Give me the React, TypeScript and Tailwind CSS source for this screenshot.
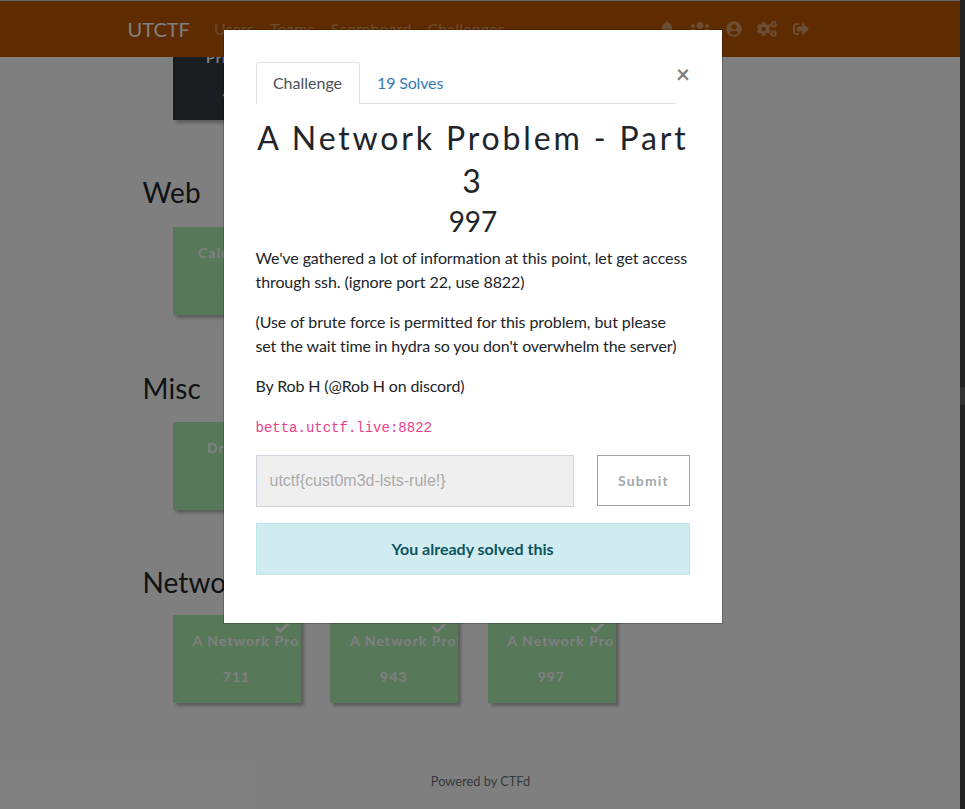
import React from "react";
import { FaBell, FaUsers, FaUserCircle, FaCogs, FaSignOutAlt, FaCheck } from "react-icons/fa";

type Item = { name: string; points: string; solved?: boolean; pad: string };

const green = "bg-[#b1f1b4]";

function Card({ item, color = green }: { item: Item; color?: string }) {
  return (
    <div
      className={`relative h-[88px] w-[128px] shrink-0 overflow-visible ${color} shadow-[3px_3px_3px_rgba(0,0,0,0.28)]`}
    >
      {item.solved && <FaCheck className="absolute right-[12px] top-[6px] text-white" size={14} />}
      <div className="h-full overflow-hidden whitespace-nowrap text-[14px] font-bold leading-[21px] tracking-[1.08px] text-white">
        <p className={`pt-[15px] ${item.pad}`}>{item.name}</p>
        <p className="pr-[1px] pt-[15px] text-center">{item.points}</p>
      </div>
    </div>
  );
}

function Category({
  title,
  items,
  className,
  gap = "pt-[18px]",
}: {
  title: string;
  items: Item[];
  className: string;
  gap?: string;
}) {
  return (
    <section className={className}>
      <h3 className="h-[34px] pl-[142.5px] text-[28px] leading-[34px] tracking-[0.1px] text-[#212529]">{title}</h3>
      <div className={`flex gap-[29.4px] pl-[173px] ${gap}`}>
        {items.map((i) => (
          <Card key={i.points + i.name} item={i} />
        ))}
      </div>
    </section>
  );
}

function Navbar() {
  return (
    <nav className="relative z-10 flex h-[57px] items-center border-t border-[#ccc] bg-[#bf5700] pl-[127.5px] text-white">
      <span className="w-[86.5px] text-[20px] leading-[30px]">UTCTF</span>
      <div className="flex w-[443px] gap-4 text-[16px] tracking-[0.12px] text-white/40">
        <span>Users</span>
        <span>Teams</span>
        <span>Scoreboard</span>
        <span>Challenges</span>
      </div>
      <div className="flex items-center text-white/40">
        <FaBell className="ml-[2px]" size={16} />
        <FaUsers className="ml-[15px]" size={20} />
        <FaUserCircle className="ml-[16px]" size={16} />
        <FaCogs className="ml-[15px]" size={20} />
        <FaSignOutAlt className="ml-[16px]" size={16} />
      </div>
    </nav>
  );
}

function Modal() {
  return (
    <div className="h-[595px] w-[500px] border border-black/20 bg-white bg-clip-padding p-8 text-[16px] leading-6 text-[#212529]">
      <div className="flex h-[42px] justify-between">
        <div className="flex w-[420px] shrink-0 border-b border-[#dee2e6]">
          <span className="-mb-px h-[42px] w-[104px] rounded-t border border-b-0 border-[#dee2e6] bg-white pr-px pt-[8px] text-center text-[#495057]">
            Challenge
          </span>
          <span className="pl-[17px] pt-[9px] tracking-[-0.15px] text-[#337ab7]">19 Solves</span>
        </div>
        <span className="text-[24px] font-bold leading-6 text-[#7f7f7f]">×</span>
      </div>
      <h2 className="-mx-2 mt-[12px] text-center text-[32px] leading-[43px] tracking-[2.85px]">
        A Network Problem - Part
        <br />3
      </h2>
      <h3 className="pt-[2px] text-center text-[28px] leading-[34px]">997</h3>
      <div className="-ml-[0.5px] mt-2 flex flex-col gap-4 whitespace-nowrap tracking-[-0.09px]">
        <p>
          We've gathered a lot of information at this point, let get access
          <br />
          through ssh. (ignore port 22, use 8822)
        </p>
        <p>
          <span className="tracking-[-0.07px]">(Use of brute force is permitted for this problem, but please</span>
          <br />
          <span className="tracking-[-0.12px]">set the wait time in hydra so you don't overwhelm the server)</span>
        </p>
        <p className="tracking-[-0.14px]">By Rob H (@Rob H on discord)</p>
        <p>
          <code className="font-['Liberation_Mono',monospace] text-[14px] tracking-normal text-[#e83e8c]">
            betta.utctf.live:8822
          </code>
        </p>
      </div>
      <div className="mt-[15px] flex items-start justify-between">
        <div className="flex h-[52px] w-[318px] items-center border border-[#ced4da] bg-[#efefef] pl-[12.5px] font-['Liberation_Sans',sans-serif] text-[#aaa]">
          utctf&#123;cust0m3d-lsts-rule!&#125;
        </div>
        <div className="flex h-[51px] w-[93px] items-center justify-center border border-[#a0a2a6] text-[14px] font-bold tracking-[1.15px] text-[#a3a8ad]">
          Submit
        </div>
      </div>
      <div className="mt-4 flex h-[52px] items-center justify-center border border-[#bee5eb] bg-[#d1ecf1] pr-px font-bold text-[#0c5460]">
        You already solved this
      </div>
    </div>
  );
}

export default function App() {
  return (
    <div className="relative flex h-[809px] w-[965px] overflow-hidden bg-white font-['Lato',sans-serif] [font-variant-ligatures:no-common-ligatures]">
      <div className="h-full w-[960px]">
        <Navbar />
        <div className="-mt-[25px] pl-[173px]">
          <Card color="bg-[#343a40]" item={{ name: "Private", points: "400", pad: "pl-[33px]" }} />
        </div>
        <Category title="Web" className="mt-[55px]" items={[{ name: "Calculator", points: "500", pad: "pl-[25px]" }]} />
        <Category
          title="Misc"
          className="mt-[56px]"
          gap="pt-[17px]"
          items={[{ name: "Drive", points: "", pad: "pl-[34px]" }]}
        />
        <Category
          title="Networking"
          className="mt-[55px]"
          gap="pt-[16px]"
          items={[
            { name: "A Network Pro", points: "711", solved: true, pad: "pl-[19.5px]" },
            { name: "A Network Problem", points: "943", solved: true, pad: "pl-[19.5px]" },
            { name: "A Network Pro", points: "997", solved: true, pad: "pl-[19.5px]" },
          ]}
        />
        <footer className="mt-[69px] pl-px text-center text-[12.8px] leading-[19px] text-[#6c757d]">Powered by CTFd</footer>
      </div>
      <div className="absolute inset-y-0 left-0 z-20 flex w-[960px] items-start bg-black/50 pl-[223px] pt-[29px]">
        <Modal />
      </div>
      <div className="h-full w-[5px] bg-[#222] pt-[387px]">
        <div className="h-[18px] bg-[#333]" />
      </div>
    </div>
  );
}
